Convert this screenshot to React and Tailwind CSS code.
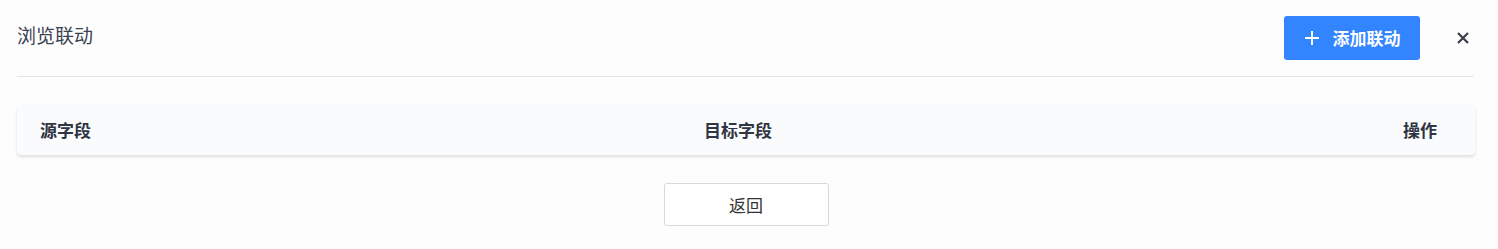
import React from 'react';

const App = () => {
  return (
    <div
      className="w-[1498px] h-[249px] bg-[#fdfdfe] text-[#333] overflow-hidden"
      style={{ fontFamily: '"Noto Sans CJK SC", "Noto Sans", sans-serif' }}
    >
      <div className="pl-[17px]">
        <div className="flex items-center h-[77px] border-b border-[#e4e6ea] w-[1457px]">
          <div className="flex-1 text-[19px] text-[#3c4250] pb-[6px]">浏览联动</div>
          <button className="flex items-center justify-center gap-[10px] w-[136px] h-[44px] rounded-[3px] bg-[#3384ff] text-white text-[17px] font-bold mb-[1px]">
            <svg width="16" height="16" viewBox="0 0 16 16" className="mr-[3px]">
              <path d="M8 1v14M1 8h14" stroke="white" strokeWidth="2" />
            </svg>
            添加联动
          </button>
          <button className="ml-[37px] mr-[5px] w-[12px] h-[16px] flex items-center justify-center mb-[1px]">
            <svg width="12" height="12" viewBox="0 0 12 12">
              <path d="M1 1l10 10M11 1L1 11" stroke="#3a3f4b" strokeWidth="2.2" />
            </svg>
          </button>
        </div>

        <div className="mt-[28px] w-[1458px] h-[50px] rounded-[4px] bg-[#fafbfc] shadow-[0_2px_3px_rgba(0,0,0,0.12)] grid grid-cols-3 items-center text-[17px] font-bold text-[#2f3542]">
          <div className="pl-[23px]">源字段</div>
          <div className="text-center pr-[16px]">目标字段</div>
          <div className="text-right pr-[38px]">操作</div>
        </div>

        <div className="flex justify-center mt-[28px] w-[1458px]">
          <button className="w-[165px] h-[43px] bg-white border border-[#d6d8dc] rounded-[3px] text-[17px] text-[#333]">
            返回
          </button>
        </div>
      </div>
    </div>
  );
};

export default App;
